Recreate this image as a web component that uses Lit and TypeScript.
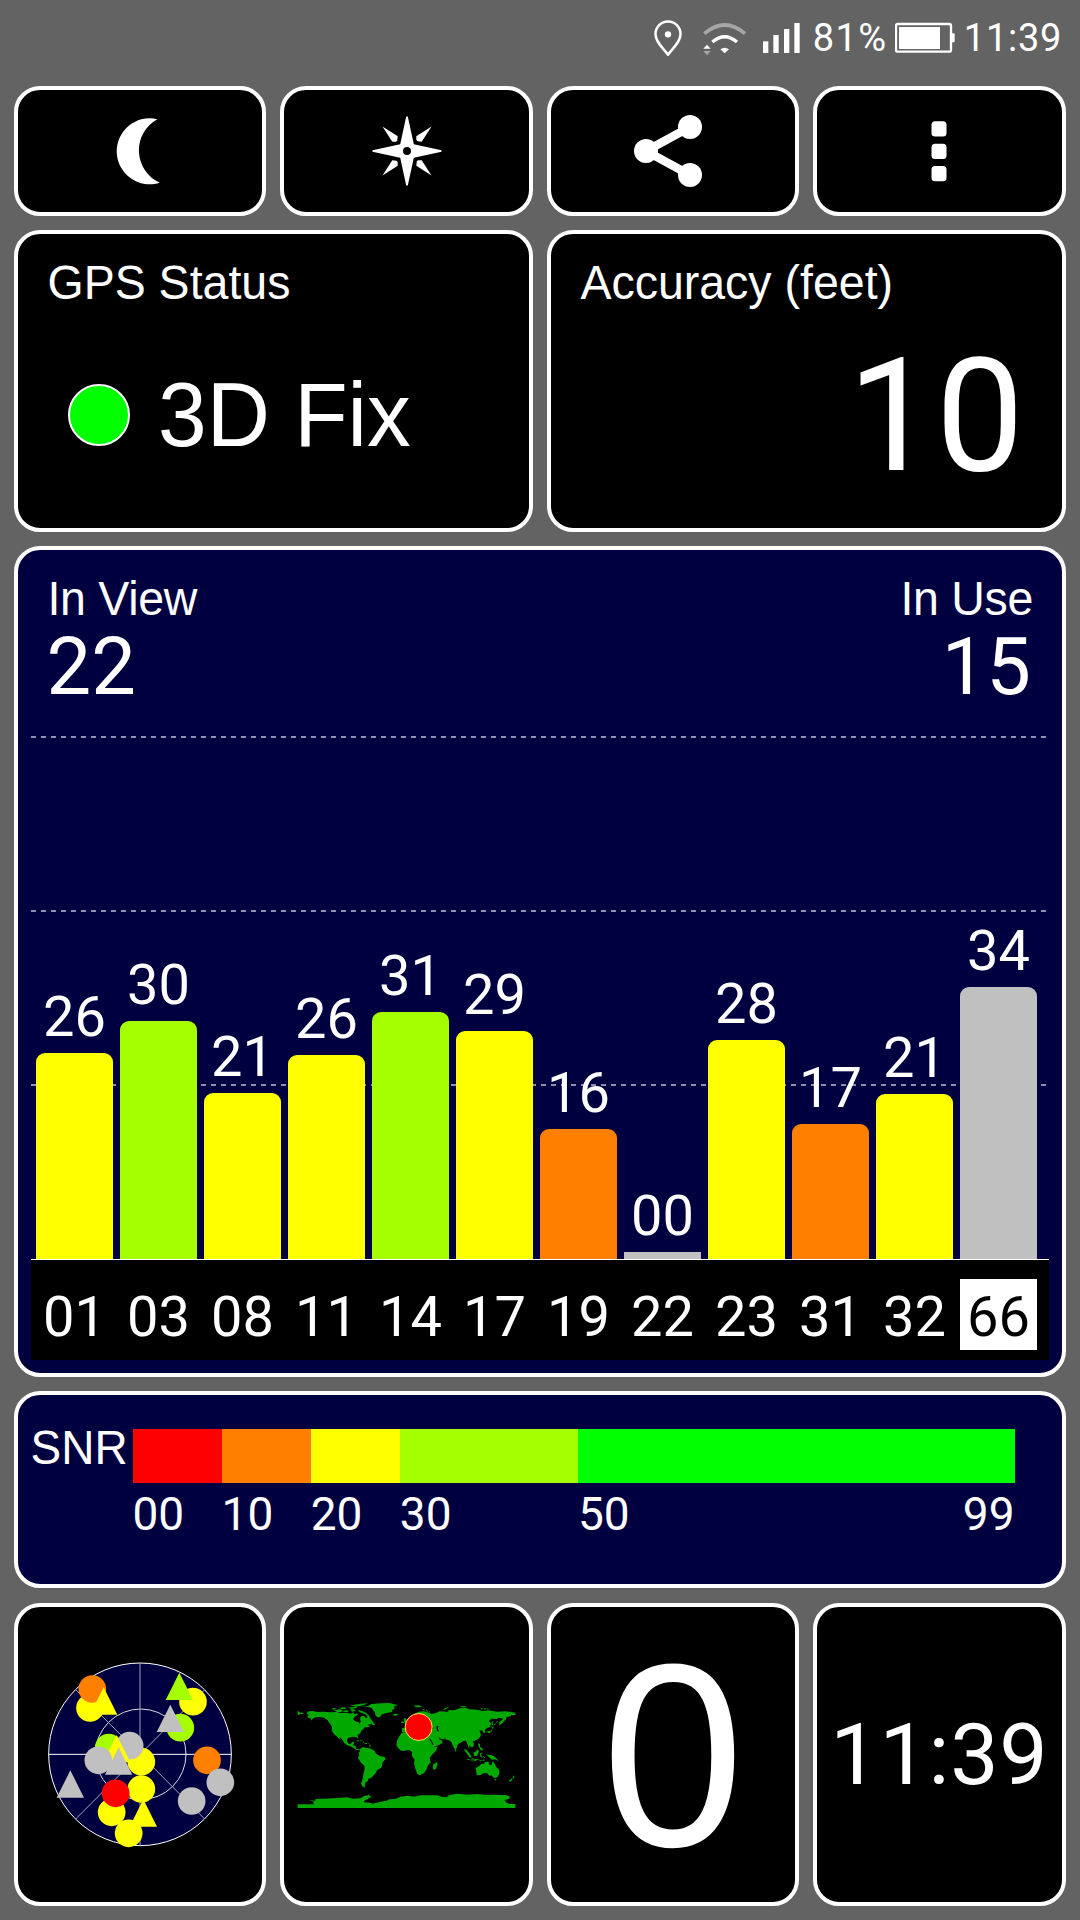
import { LitElement, html, css, svg } from "lit";
import { customElement } from "lit/decorators.js";

type Satellite = { prn: string; snr: string; height: number; color: string; augmented?: boolean };

const YELLOW = "#ffff00";
const LIME = "#a6ff00";
const ORANGE = "#ff8000";
const GRAY = "#c0c0c0";
const RED = "#ff0000";
const GREEN = "#00ff00";

const SATELLITES: Satellite[] = [
  { prn: "01", snr: "26", height: 206, color: YELLOW },
  { prn: "03", snr: "30", height: 238, color: LIME },
  { prn: "08", snr: "21", height: 166, color: YELLOW },
  { prn: "11", snr: "26", height: 204, color: YELLOW },
  { prn: "14", snr: "31", height: 247, color: LIME },
  { prn: "17", snr: "29", height: 228, color: YELLOW },
  { prn: "19", snr: "16", height: 130, color: ORANGE },
  { prn: "22", snr: "00", height: 7, color: GRAY },
  { prn: "23", snr: "28", height: 219, color: YELLOW },
  { prn: "31", snr: "17", height: 135, color: ORANGE },
  { prn: "32", snr: "21", height: 165, color: YELLOW },
  { prn: "66", snr: "34", height: 272, color: GRAY, augmented: true },
];

const SNR_BANDS = [
  { from: "00", span: 10, color: RED },
  { from: "10", span: 10, color: ORANGE },
  { from: "20", span: 10, color: YELLOW },
  { from: "30", span: 20, color: LIME },
  { from: "50", span: 49, color: GREEN, to: "99" },
];

/** Markers of the sky plot in drawing order: [shape, x, y, colour]; y is the apex of a triangle. */
const SKY: [string, number, number, string][] = [
  ["c", 180, 204, YELLOW],
  ["c", 187, 147, ORANGE],
  ["t", 221, 142, YELLOW],
  ["c", 451, 263, LIME],
  ["c", 489, 185, YELLOW],
  ["t", 448, 98, LIME],
  ["t", 421, 194, GRAY],
  ["c", 236, 323, LIME],
  ["c", 334, 365, YELLOW],
  ["c", 299, 317, GRAY],
  ["t", 260, 285, YELLOW],
  ["c", 205, 361, GRAY],
  ["t", 266, 322, GRAY],
  ["c", 531, 361, ORANGE],
  ["c", 571, 427, GRAY],
  ["c", 485, 483, GRAY],
  ["t", 121, 391, GRAY],
  ["t", 340, 478, YELLOW],
  ["c", 334, 447, YELLOW],
  ["c", 245, 517, YELLOW],
  ["c", 257, 460, RED],
  ["c", 296, 580, YELLOW],
];

const LAND = [
  "51,91 56,97 68,99 68,103 58,101 55,105 51,104",
  "78,99 84,94 100,93 104,96 128,95 150,97 168,96 180,99 200,98 210,101 218,97 222,103 230,100 232,104 222,110 217,118 224,124 234,126 237,133 240,124 238,114 243,107 250,108 256,114 262,111 268,122 275,128 270,133 260,134 268,138 262,142 252,142 248,148 241,153 240,159 231,165 233,178 228,172 220,170 210,172 202,174 199,182 203,191 211,191 214,186 221,186 217,196 225,198 226,206 238,208 236,211 226,209 214,201 200,196 191,190 184,178 176,170 180,182 170,170 160,163 153,151 154,140 148,131 140,120 130,113 116,111 104,112 96,117 88,123 92,116 82,113 80,108 86,105 80,103",
  "238,207 246,201 258,204 268,205 282,213 286,221 298,228 312,231 315,237 306,247 304,258 300,265 290,269 286,278 278,287 272,293 262,297 262,303 254,308 252,320 258,323 246,320 241,311 246,296 248,282 252,268 251,257 241,248 232,234 236,226 234,218 238,214",
  "246,77 262,78 272,72 300,70 325,69 342,73 352,75 340,79 342,86 334,90 334,96 318,99 304,103 298,111 290,112 284,106 283,97 276,90 274,84 262,81",
  "232,90 246,93 256,99 266,108 270,117 276,124 284,136 276,135 272,128 262,124 258,118 262,112 256,104 246,100 236,96",
  "160,91 178,88 186,90 182,96 170,97",
  "184,93 200,90 204,95 192,97",
  "152,86 160,84 168,86 160,89",
  "176,83 192,82 198,86 184,88",
  "200,83 224,80 232,84 212,86",
  "208,88 220,88 226,93 214,95",
  "210,76 240,71 262,70 248,76 226,80",
  "336,103 344,101 354,102 350,106 340,107",
  "400,77 412,76 426,79 416,82 404,81",
  "488,88 494,84 506,81 502,84 492,89",
  "536,78 552,78 560,82 546,82",
  "363,124 370,126 368,130 361,129",
  "370,114 377,116 378,128 385,130 374,133 370,124",
  "364,144 380,143 388,146 380,154 370,158 364,156",
  "378,136 390,128 400,122 400,116 392,116 390,108 402,101 414,95 428,94 446,98 452,102 468,98 476,94 500,95 506,90 520,91 540,84 556,84 566,88 590,89 606,93 624,91 650,95 676,94 704,98 704,105 692,105 690,109 678,111 676,118 666,128 656,137 656,127 668,116 656,113 648,117 632,116 624,124 632,130 628,140 618,145 612,150 614,157 610,160 604,151 596,152 600,160 600,169 592,178 582,182 576,184 580,192 578,200 572,202 566,196 566,206 572,214 564,204 560,192 556,182 548,183 540,188 532,192 528,204 524,210 516,196 512,186 504,180 490,178 480,176 472,170 478,180 486,182 484,190 470,197 456,202 450,192 440,176 440,167 430,167 420,160 424,156 412,158 400,150 392,146 378,146",
  "362,160 374,157 390,155 396,163 410,168 420,165 440,168 444,180 452,194 458,202 471,200 466,212 454,224 447,234 450,248 442,256 438,268 430,280 416,286 410,282 404,266 400,250 402,240 394,228 394,216 386,210 372,212 362,213 352,204 347,196 349,182 354,172",
  "458,252 464,250 468,245 471,252 466,266 460,270 456,264",
  "522,208 526,209 528,214 523,214",
  "551,206 558,210 568,222 573,232 568,233 560,223 552,212",
  "572,235 590,237 598,240 588,240 573,238",
  "578,218 586,214 590,208 595,214 592,222 588,229 580,227",
  "598,220 608,218 601,223 606,234 599,230",
  "592,190 598,192 598,200 606,206 606,212 600,210 594,200",
  "616,222 622,224 632,225 644,231 654,243 642,238 634,240 624,230",
  "605,159 618,156 626,160 634,152 636,147 630,152 622,154",
  "632,138 640,143 634,146",
  "633,123 636,124 637,136 633,135",
  "585,264 596,258 602,251 610,251 614,245 626,246 624,252 632,256 636,243 642,251 646,260 656,270 656,282 650,292 640,294 632,286 626,287 620,280 608,280 600,285 588,286 587,276",
  "642,297 648,297 645,302",
  "697,286 702,292 696,297",
  "694,295 696,299 688,305 684,303",
  "51,373 102,373 96,368 102,366 84,361 104,362 104,357 130,356 170,354 200,352 216,356 240,355 250,348 262,346 270,335 264,345 272,350 262,356 250,363 250,367 268,368 276,371 300,365 318,362 326,358 344,357 360,350 380,347 400,350 420,346 446,346 470,346 484,351 498,352 506,345 530,341 560,344 590,342 620,345 650,344 680,346 688,350 686,356 672,360 678,368 688,372 704,372 704,384 51,384",
];

const LAKES = [
  "467,139 473,138 472,146 475,154 469,154",
  "444,140 456,140 458,146 446,147",
  "446,176 449,176 459,194 456,195",
  "488,176 496,176 497,178 488,178",
];

@customElement("app-root")
export class AppRoot extends LitElement {
  static styles = css`
    :host {
      display: block;
      width: 1080px;
      height: 1920px;
      background: #636363;
      color: #fff;
      font-family: "Liberation Sans", Arial, sans-serif;
      overflow: hidden;
    }
    svg {
      display: block;
      flex: none;
    }
    .status-bar {
      display: flex;
      align-items: center;
      justify-content: flex-end;
      height: 75px;
      margin-bottom: 11px;
      padding-right: 18px;
      box-sizing: border-box;
      font: 38px/44px Roboto, "Liberation Sans", sans-serif;
    }
    .pin { margin-right: 21px; }
    .wifi { margin-right: 17px; }
    .signal { margin-right: 13px; }
    .percent {
      width: 82px;
      letter-spacing: 1.4px;
      white-space: nowrap;
    }
    .battery { margin-right: 9px; }
    .time { letter-spacing: 0.7px; }
    .page {
      display: grid;
      grid-template-rows: 130px 302px 831px 197px 304px;
      row-gap: 14px;
      padding: 0 14.5px 0 14px;
    }
    .row {
      display: grid;
      gap: 14.3px;
    }
    .four { grid-template-columns: repeat(4, 1fr); }
    .two { grid-template-columns: repeat(2, 1fr); }
    .bottom { margin-top: 1px; }
    .card {
      box-sizing: border-box;
      border: 4px solid #fff;
      border-radius: 26px;
      background: #000;
      min-width: 0;
      overflow: hidden;
    }
    .navy { background: #000040; }
    .center {
      display: flex;
      align-items: center;
      justify-content: center;
    }
    .info { padding: 22.5px 29.5px 0; }
    .title {
      font-size: 46.5px;
      line-height: 50px;
      transform: scaleY(1.04);
      white-space: nowrap;
    }
    .fix {
      display: flex;
      align-items: center;
      gap: 28.5px;
      height: 100px;
      margin: 58.5px 0 0 20px;
      font-size: 87.5px;
      line-height: 100px;
    }
    .fix-text { transform: scaleY(1.04); }
    .lamp {
      width: 62px;
      height: 62px;
      box-sizing: border-box;
      border: 2px solid #fff;
      border-radius: 50%;
      background: #00ff00;
    }
    .accuracy {
      margin: 29.5px 8px 0 0;
      text-align: right;
      font: 157px/160px Roboto, "Liberation Sans", sans-serif;
    }
    .sats {
      display: flex;
      flex-direction: column;
    }
    .head {
      display: flex;
      justify-content: space-between;
      height: 157px;
      box-sizing: border-box;
      padding: 22.5px 28.5px 0 29.5px;
      flex: none;
    }
    .head .title { letter-spacing: -0.3px; }
    .right { text-align: right; }
    .count {
      margin: 4.5px 0 0 -1px;
      font: 79.5px/80px Roboto, "Liberation Sans", sans-serif;
    }
    .right .count { margin-right: 2px; }
    .plot {
      --dash: repeating-linear-gradient(90deg, #8e8eb4 0 5px, transparent 5px 10px);
      display: flex;
      align-items: flex-end;
      gap: 7px;
      flex: none;
      width: 1018px;
      height: 552px;
      box-sizing: border-box;
      margin-left: 13px;
      padding-left: 5px;
      background-image: var(--dash), var(--dash), var(--dash);
      background-size: 1015px 2px;
      background-position: 0 29px, 0 203px, 0 377px;
      background-repeat: no-repeat;
      font: 56px/56px Roboto, "Liberation Sans", sans-serif;
    }
    .sat {
      display: flex;
      flex-direction: column;
      align-items: center;
      width: 77px;
    }
    .snr { margin-bottom: 8px; }
    .bar {
      width: 77px;
      border-radius: 9px 9px 0 0;
    }
    .bar.flat { border-radius: 0; }
    .prns {
      display: flex;
      gap: 7px;
      flex: none;
      width: 1018px;
      height: 101px;
      box-sizing: border-box;
      margin-left: 13px;
      padding: 19px 0 0 5px;
      border-top: 1px solid #fff;
      background: #000;
      font: 56px/76px Roboto, "Liberation Sans", sans-serif;
    }
    .prn {
      width: 77px;
      height: 71px;
      text-align: center;
    }
    .prn.augmented {
      background: #fff;
      color: #000;
    }
    .legend {
      display: flex;
      padding: 27px 0 0 12.5px;
    }
    .legend-label {
      width: 102px;
      flex: none;
      margin-top: 2.5px;
      font-size: 46px;
    }
    .scale {
      display: flex;
      width: 882px;
      padding-top: 7px;
    }
    .band { min-width: 0; flex-basis: 0; }
    .swatch {
      height: 54px;
      margin-bottom: 6px;
    }
    .ticks {
      display: flex;
      justify-content: space-between;
      font: 46px/50px Roboto, "Liberation Sans", sans-serif;
    }
    .speed {
      display: block;
      font-size: 256px;
      line-height: 260px;
      transform: scaleY(1.02);
    }
    .clock {
      font: 86px/100px Roboto, "Liberation Sans", sans-serif;
      letter-spacing: 0.8px;
      white-space: nowrap;
    }
  `;

  private statusBar() {
    return html`
      <div class="status-bar">
        <svg class="pin" width="28" height="36" viewBox="99 52 84 108">
          <path d="M141 156C126 135 103.500 119 103.500 94A37.500 37.500 0 0 1 178.500 94C178.500 119 156 135 141 156Z" fill="none" stroke="#fff" stroke-width="7.500" />
          <circle cx="141" cy="95" r="9.500" fill="#fff" />
        </svg>
        <svg class="wifi" width="43" height="36" viewBox="247 54 129 108">
          <path d="M251 95Q312 43 373 95" fill="none" stroke="#a6a6a6" stroke-width="11" />
          <path d="M275 120Q312 88 349 120" fill="none" stroke="#fff" stroke-width="10" />
          <path d="M299 142Q312 132 325 142L312 154Z" fill="#fff" />
          <path d="M248 140L259 128L270 140Z" fill="#fff" />
          <path d="M248 147L259 160L270 147Z" fill="#a6a6a6" />
        </svg>
        <svg class="signal" width="37" height="36" viewBox="427 54 111 108" fill="#fff">
          <rect x="427" y="118" width="16" height="35" />
          <rect x="458" y="99" width="16" height="54" />
          <rect x="490" y="81" width="16" height="72" />
          <rect x="521" y="63" width="16" height="90" />
        </svg>
        <span class="percent">81%</span>
        <svg class="battery" width="60" height="36" viewBox="822 54 180 108">
          <rect x="825" y="66" width="165" height="83" rx="5" fill="none" stroke="#fff" stroke-width="7" />
          <rect x="834" y="75" width="123" height="66" fill="#fff" />
          <rect x="990" y="94" width="11" height="27" rx="3" fill="#fff" />
        </svg>
        <span class="time">11:39</span>
      </div>
    `;
  }

  private toolbar() {
    return html`
      <div class="row four">
        <div class="card center">
          <svg width="72" height="72" viewBox="-36 -36 72 72">
            <path d="M17.400 -31.800A33 33 0 1 0 19.800 31.700A35.500 35.500 0 0 1 17.400 -31.800Z" fill="#fff" />
          </svg>
        </div>
        <div class="card center">
          <svg width="72" height="72" viewBox="-36 -36 72 72" fill="#fff">
            <path fill-rule="evenodd" d="M-.8 -34.500H.8L6.800 -6.800L34.500 -.8V.8L6.800 6.800L.8 34.500H-.8L-6.800 6.800L-34.500 .8V-.8L-6.800 -6.800ZM0 -4A4 4 0 1 0 0 4A4 4 0 1 0 0 -4Z" />
            ${[0, 90, 180, 270].map(
              (a) => svg`<path transform="rotate(${a})" d="M-24.500 -24.500L-9.300 -14.700L-9.800 -10.600L-11 -9.300L-14.700 -9.300Z" />`
            )}
          </svg>
        </div>
        <div class="card center">
          <svg width="80" height="80" viewBox="-40 -40 80 80" fill="#fff">
            <path d="M17 -24L-27 0L17 24" fill="none" stroke="#fff" stroke-width="8.500" />
            <circle cx="17" cy="-24" r="12" />
            <circle cx="17" cy="24" r="12" />
            <circle cx="-27" cy="0" r="12" />
          </svg>
        </div>
        <div class="card center">
          <svg width="72" height="72" viewBox="-36 -36 72 72" fill="#fff">
            <rect x="-7.500" y="-29.700" width="15" height="15.300" rx="3.500" />
            <rect x="-7.500" y="-7.300" width="15" height="15.300" rx="3.500" />
            <rect x="-7.500" y="15" width="15" height="15.300" rx="3.500" />
          </svg>
        </div>
      </div>
    `;
  }

  private skyPlot() {
    return html`
      <svg width="220" height="230" viewBox="0 0 660 690">
        <circle cx="330" cy="343" r="274" fill="#000040" stroke="#fff" stroke-width="3" />
        <circle cx="332" cy="343" r="136" fill="none" stroke="#d8d8e4" stroke-width="3" />
        <path d="M137 149L524 537M524 149L137 537M330 69V617" stroke="#a4a4bc" stroke-width="3" />
        <path d="M56 343H604" stroke="#fff" stroke-width="3" />
        ${SKY.map(([shape, x, y, color]) =>
          shape === "c"
            ? svg`<circle cx=${x} cy=${y} r="41.5" fill=${color} />`
            : svg`<path d="M${x} ${y}L${x + 41} ${y + 82}H${x - 41}Z" fill=${color} />`
        )}
      </svg>
    `;
  }

  private worldMap() {
    return html`
      <svg width="250" height="150" viewBox="4 0 750 450">
        ${LAND.map((points) => svg`<polygon points=${points} fill="#00a800" />`)}
        ${LAKES.map((points) => svg`<polygon points=${points} fill="#000" />`)}
        <path d="M228 183L240 181L250 187M252 190L264 191M268 194V201M560 238L590 243M596 243L612 240M640 136L652 122M608 228L614 236M426 88L448 96M600 86L624 87" fill="none" stroke="#00a800" stroke-width="3" stroke-dasharray="7 3" />
        <circle cx="414" cy="141" r="40.500" fill="#f00" stroke="#ffe94a" stroke-width="3" />
      </svg>
    `;
  }

  render() {
    return html`
      ${this.statusBar()}
      <div class="page">
        ${this.toolbar()}
        <div class="row two">
          <div class="card info">
            <div class="title">GPS Status</div>
            <div class="fix">
              <div class="lamp"></div>
              <div class="fix-text">3D Fix</div>
            </div>
          </div>
          <div class="card info">
            <div class="title">Accuracy (feet)</div>
            <div class="accuracy">10</div>
          </div>
        </div>
        <div class="card navy sats">
          <div class="head">
            <div>
              <div class="title">In View</div>
              <div class="count">22</div>
            </div>
            <div class="right">
              <div class="title">In Use</div>
              <div class="count">15</div>
            </div>
          </div>
          <div class="plot">
            ${SATELLITES.map(
              (s) => html`
                <div class="sat">
                  <div class="snr">${s.snr}</div>
                  <div class="bar ${s.height < 10 ? "flat" : ""}" style="height:${s.height}px;background:${s.color}"></div>
                </div>
              `
            )}
          </div>
          <div class="prns">
            ${SATELLITES.map((s) => html`<div class="prn ${s.augmented ? "augmented" : ""}">${s.prn}</div>`)}
          </div>
        </div>
        <div class="card navy legend">
          <div class="title legend-label">SNR</div>
          <div class="scale">
            ${SNR_BANDS.map(
              (b) => html`
                <div class="band" style="flex-grow:${b.span}">
                  <div class="swatch" style="background:${b.color}"></div>
                  <div class="ticks"><span>${b.from}</span>${b.to ? html`<span>${b.to}</span>` : ""}</div>
                </div>
              `
            )}
          </div>
        </div>
        <div class="row four bottom">
          <div class="card center">${this.skyPlot()}</div>
          <div class="card center">${this.worldMap()}</div>
          <div class="card center"><span class="speed">0</span></div>
          <div class="card center"><span class="clock">11:39</span></div>
        </div>
      </div>
    `;
  }
}
